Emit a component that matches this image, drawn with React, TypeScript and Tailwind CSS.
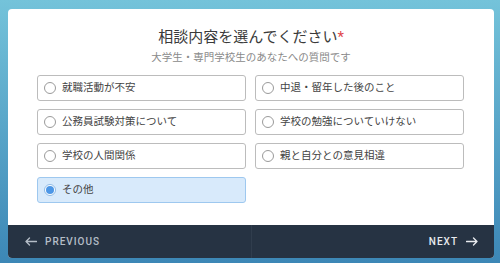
import React, { useState } from 'react';

const options = [
  '就職活動が不安',
  '中退・留年した後のこと',
  '公務員試験対策について',
  '学校の勉強についていけない',
  '学校の人間関係',
  '親と自分との意見相違',
  'その他',
];

const Arrow: React.FC<{ dir: 'left' | 'right' }> = ({ dir }) => (
  <svg width="12" height="9" viewBox="0 0 12 9" fill="none" stroke="currentColor" strokeWidth="1.3">
    {dir === 'left' ? (
      <path d="M11.5 4.5H1M4.5 1L1 4.5L4.5 8" strokeLinecap="round" strokeLinejoin="round" />
    ) : (
      <path d="M0.5 4.5H11M7.5 1L11 4.5L7.5 8" strokeLinecap="round" strokeLinejoin="round" />
    )}
  </svg>
);

const App: React.FC = () => {
  const [selected, setSelected] = useState('その他');

  return (
    <div
      className="h-[263px] w-[500px] bg-gradient-to-b from-[#74c3da] to-[#3c87b6] pl-[8px] pr-[6px] pt-[9px] pb-[5px]"
      style={{ fontFamily: 'Roboto, "Noto Sans CJK JP", sans-serif' }}
    >
      <div className="flex h-full flex-col overflow-hidden rounded-[4px] bg-white">
        <div className="flex-1 pt-[17px]">
          <h1 className="text-center text-[15px] leading-[22px] text-[#3a3a3a]">
            相談内容を選んでください<span className="text-[#e0474c]">*</span>
          </h1>
          <p className="mt-[2px] text-center text-[10.5px] leading-[16px] text-[#8a8a8a]">
            大学生・専門学校生のあなたへの質問です
          </p>
          <div className="mt-[9px] grid grid-cols-2 gap-x-[9px] gap-y-[8px] pl-[29px] pr-[30px]">
            {options.map(opt => {
              const active = opt === selected;
              return (
                <button
                  key={opt}
                  onClick={() => setSelected(opt)}
                  className={
                    active
                      ? 'flex h-[26px] items-center gap-[6px] rounded-[3px] border border-[#9ec8ef] bg-[#d8eafb] pl-[6px] text-left'
                      : 'flex h-[26px] items-center gap-[6px] rounded-[3px] border border-[#bcbcbc] bg-white pl-[6px] text-left'
                  }
                >
                  {active ? (
                    <span className="flex h-[12px] w-[12px] items-center justify-center rounded-full border border-[#8fbbe6] bg-white">
                      <span className="h-[8px] w-[8px] rounded-full bg-[#4d97e6]" />
                    </span>
                  ) : (
                    <span className="h-[12px] w-[12px] rounded-full border border-[#9a9a9a] bg-white" />
                  )}
                  <span className="text-[10.5px] text-[#444]">{opt}</span>
                </button>
              );
            })}
          </div>
        </div>
        <div className="flex h-[33px] bg-[#263343]">
          <div className="flex flex-1 items-center gap-[8px] pl-[17px] text-[#b4bdc7]">
            <Arrow dir="left" />
            <span className="text-[10px] font-medium tracking-[1px]">PREVIOUS</span>
          </div>
          <div className="flex flex-1 items-center justify-end gap-[8px] border-l border-[#303d4d] pr-[16px] text-[#e8ebef]">
            <span className="text-[10px] font-medium tracking-[1px]">NEXT</span>
            <Arrow dir="right" />
          </div>
        </div>
      </div>
    </div>
  );
};

export default App;
